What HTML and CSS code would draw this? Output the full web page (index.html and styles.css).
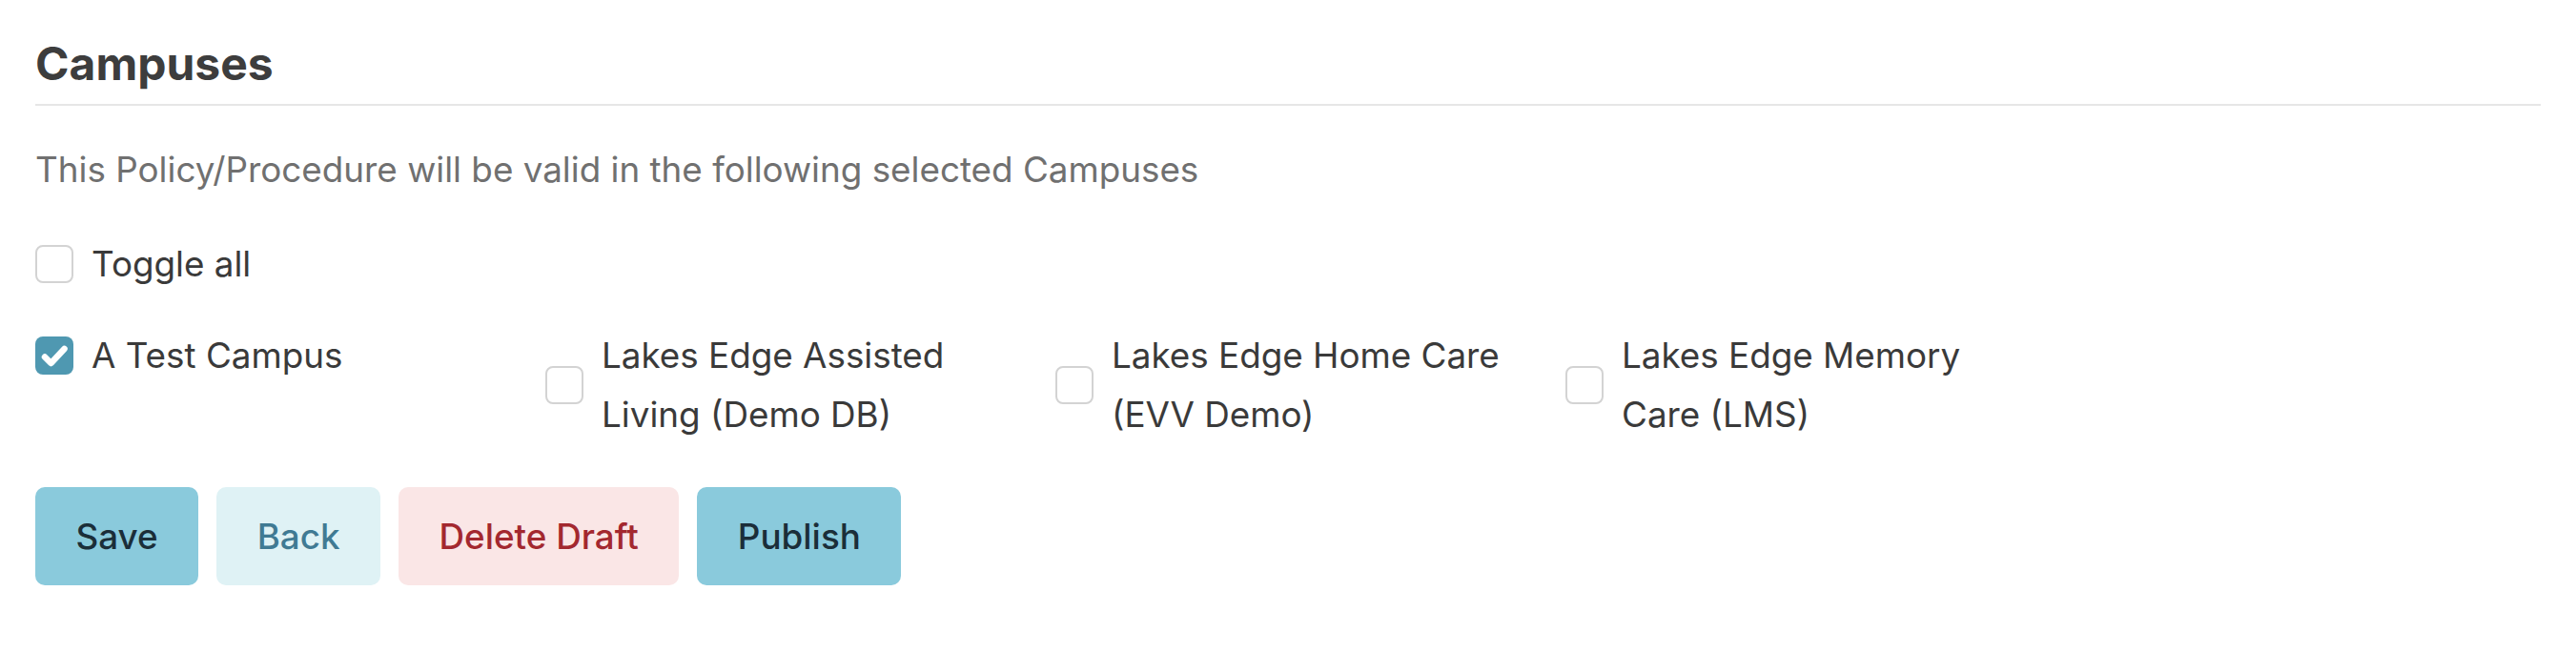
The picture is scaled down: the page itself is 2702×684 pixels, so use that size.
FILE: index.html
```html
<!DOCTYPE html>
<html lang="en">
<head>
<meta charset="utf-8">
<title>Campuses</title>
<link rel="stylesheet" href="styles.css">
</head>
<body>
<main class="page">
  <h2 class="title">Campuses</h2>
  <p class="desc">This Policy/Procedure will be valid in the following selected Campuses</p>

  <label class="check toggle">
    <span class="box"></span>
    <span class="text">Toggle all</span>
  </label>

  <div class="grid">
    <label class="check">
      <span class="box checked"><svg viewBox="0 0 40 40" width="40" height="40"><path d="M10 21.5 L16.5 28 L30.5 13" fill="none" stroke="#fff" stroke-width="6.5" stroke-linecap="round" stroke-linejoin="round"/></svg></span>
      <span class="text">A Test Campus</span>
    </label>
    <label class="check">
      <span class="box"></span>
      <span class="text">Lakes Edge Assisted Living (Demo DB)</span>
    </label>
    <label class="check">
      <span class="box"></span>
      <span class="text">Lakes Edge Home Care (EVV Demo)</span>
    </label>
    <label class="check">
      <span class="box"></span>
      <span class="text">Lakes Edge Memory Care (LMS)</span>
    </label>
  </div>

  <div class="actions">
    <button class="btn btn-info">Save</button>
    <button class="btn btn-light">Back</button>
    <button class="btn btn-danger">Delete Draft</button>
    <button class="btn btn-info">Publish</button>
  </div>
</main>
</body>
</html>
```
FILE: styles.css
```css
html, body {
  margin: 0;
  padding: 0;
  background: #ffffff;
}

body {
  font-family: Inter, "Noto Sans", "Liberation Sans", sans-serif;
  color: #3a3a3a;
}

.page {
  width: 2628px;
  padding: 38px 0 0 37px;
}

.title {
  margin: 0;
  font-size: 48px;
  line-height: 58px;
  font-weight: 700;
  color: #3d3d3d;
  padding-bottom: 13px;
  border-bottom: 2px solid #e6e6e6;
}

.desc {
  margin: 36px 0 0 0;
  font-size: 36.8px;
  line-height: 62px;
  color: #707070;
}

.check {
  display: flex;
  align-items: center;
  gap: 19px;
  font-size: 36.8px;
  line-height: 62px;
  color: #3a3a3a;
}

.toggle {
  margin-top: 37px;
}

.box {
  flex: 0 0 auto;
  width: 40px;
  height: 40px;
  box-sizing: border-box;
  border: 2px solid #d3d3d3;
  border-radius: 8px;
  background: #fff;
  display: block;
}

.box.checked {
  border: none;
  background: #4f98b1;
}

.box svg {
  display: block;
}

.grid {
  margin-top: 34px;
  display: grid;
  grid-template-columns: repeat(4, 484px);
  column-gap: 51px;
  align-items: start;
}

.grid .text {
  min-width: 0;
}

.actions {
  margin-top: 45px;
  display: flex;
  gap: 19px;
}

.btn {
  font-family: Inter, "Noto Sans", "Liberation Sans", sans-serif;
  font-size: 36.8px;
  font-weight: 500;
  line-height: 55px;
  padding: 24px 42.5px;
  border: none;
  border-radius: 10px;
  cursor: pointer;
}

.btn-info {
  background: #8acadc;
  color: #1b2e39;
}

.btn-light {
  background: #dff2f5;
  color: #3f7a93;
}

.btn-danger {
  background: #fae6e6;
  color: #a3282f;
}
```
